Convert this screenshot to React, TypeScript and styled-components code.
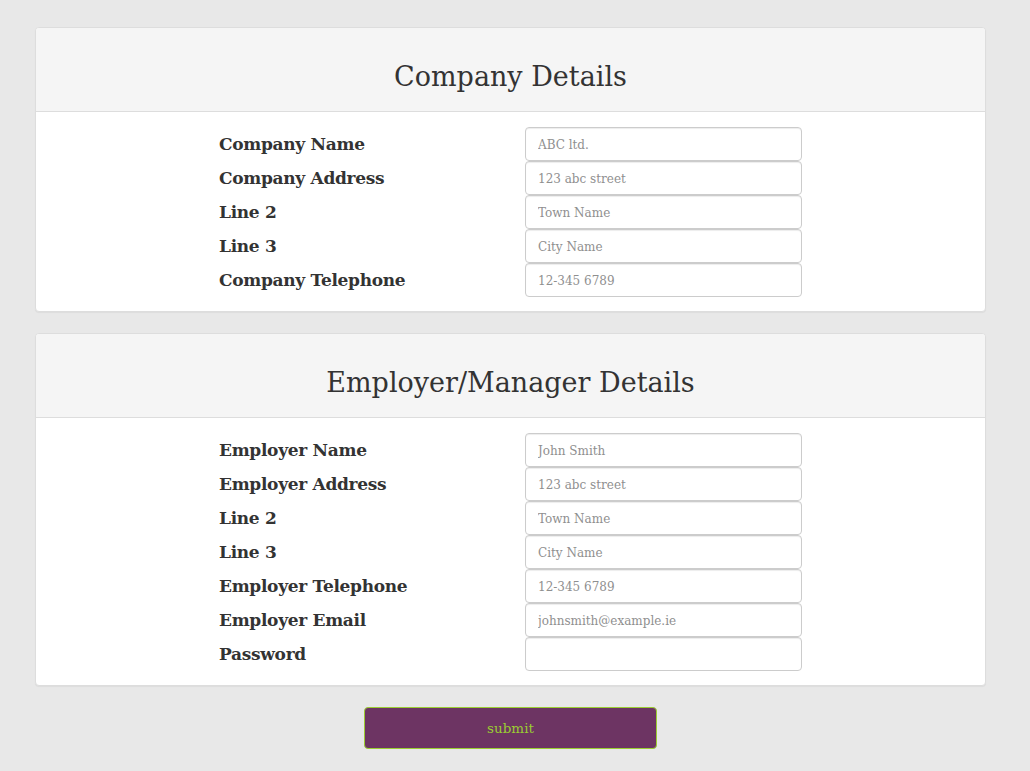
import React from "react";
import styled, { createGlobalStyle } from "styled-components";

const GlobalStyle = createGlobalStyle`
  html, body {
    margin: 0;
    padding: 0;
    background: #e8e8e8;
    font-family: "DejaVu Serif", "Liberation Serif", serif;
    color: #333;
  }
`;

const Page = styled.div`
  width: 951px;
  margin-left: 35px;
  padding-top: 27px;
  padding-bottom: 23px;
  display: flex;
  flex-direction: column;
  gap: 21px;
`;

const Panel = styled.section`
  background: #fff;
  border: 1px solid #ddd;
  border-radius: 4px;
  box-shadow: 0 1px 1px rgba(0, 0, 0, 0.05);
  overflow: hidden;
`;

const PanelHeading = styled.div`
  background: #f5f5f5;
  border-bottom: 1px solid #ddd;
  height: 84px;
  display: flex;
  align-items: center;
  justify-content: center;
  padding-top: 14px;
  box-sizing: border-box;
`;

const Title = styled.h2`
  margin: 0;
  font-size: 27px;
  font-weight: normal;
  color: #333;
`;

const PanelBody = styled.div`
  padding: 15px 0 14px;
`;

const Row = styled.div`
  display: grid;
  grid-template-columns: 306px 277px;
  padding-left: 183px;
  align-items: center;
`;

const Label = styled.label`
  font-size: 17px;
  font-weight: bold;
  color: #333;
  letter-spacing: -0.3px;
`;

const Input = styled.input`
  box-sizing: border-box;
  width: 277px;
  height: 34px;
  padding: 2px 12px 0;
  border: 1px solid #ccc;
  border-radius: 4px;
  box-shadow: inset 0 1px 1px rgba(0, 0, 0, 0.075);
  font-family: "DejaVu Serif", "Liberation Serif", serif;
  font-size: 12px;
  color: #555;
  &::placeholder {
    color: #8f8f8f;
  }
`;

const Actions = styled.div`
  display: flex;
  justify-content: center;
`;

const SubmitButton = styled.button`
  width: 293px;
  height: 42px;
  background: #6d3463;
  color: #9acd32;
  border: 1px solid #9acd32;
  border-radius: 4px;
  font-family: "DejaVu Serif", "Liberation Serif", serif;
  font-size: 13.5px;
  font-weight: normal;
  cursor: pointer;
`;

type Field = { label: string; placeholder: string; type?: string };

const companyFields: Field[] = [
  { label: "Company Name", placeholder: "ABC ltd." },
  { label: "Company Address", placeholder: "123 abc street" },
  { label: "Line 2", placeholder: "Town Name" },
  { label: "Line 3", placeholder: "City Name" },
  { label: "Company Telephone", placeholder: "12-345 6789" },
];

const employerFields: Field[] = [
  { label: "Employer Name", placeholder: "John Smith" },
  { label: "Employer Address", placeholder: "123 abc street" },
  { label: "Line 2", placeholder: "Town Name" },
  { label: "Line 3", placeholder: "City Name" },
  { label: "Employer Telephone", placeholder: "12-345 6789" },
  { label: "Employer Email", placeholder: "johnsmith@example.ie" },
  { label: "Password", placeholder: "", type: "password" },
];

const FormPanel = ({ title, fields }: { title: string; fields: Field[] }) => (
  <Panel>
    <PanelHeading>
      <Title>{title}</Title>
    </PanelHeading>
    <PanelBody>
      {fields.map((f, i) => (
        <Row key={`${title}-${i}`}>
          <Label>{f.label}</Label>
          <Input type={f.type || "text"} placeholder={f.placeholder} />
        </Row>
      ))}
    </PanelBody>
  </Panel>
);

export default function App() {
  return (
    <>
      <GlobalStyle />
      <Page>
        <FormPanel title="Company Details" fields={companyFields} />
        <FormPanel title="Employer/Manager Details" fields={employerFields} />
        <Actions>
          <SubmitButton type="button">submit</SubmitButton>
        </Actions>
      </Page>
    </>
  );
}
